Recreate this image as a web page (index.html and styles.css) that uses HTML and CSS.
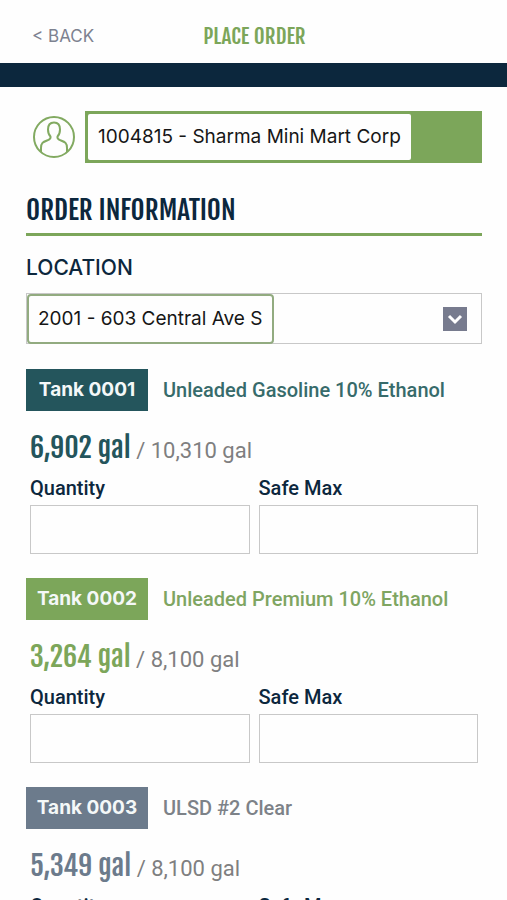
FILE: index.html
```html
<!DOCTYPE html>
<html lang="en">
<head>
<meta charset="utf-8">
<meta name="viewport" content="width=device-width, initial-scale=1">
<title>Place Order</title>
<link rel="stylesheet" href="styles.css">
</head>
<body>
<header class="topbar">
  <a class="back" href="#"><span>&lt;</span> BACK</a>
  <h1 class="title">PLACE ORDER</h1>
</header>
<div class="band"></div>
<main class="content">
  <div class="account">
    <svg class="avatar" viewBox="0 0 42 42" fill="none" stroke="currentColor" aria-hidden="true">
      <circle cx="21" cy="21" r="20"/>
      <path d="M8 36v-4c0-5 2-6 6-7.500 3-1 4-2 3.500-4-2-2-2.500-4-2.500-7 0-4 2-7 6-7s6 3 6 7c0 3-.5 5-2.500 7-.5 2 .5 3 3.500 4 4 1.500 6 2.500 6 7.500v4"/>
    </svg>
    <div class="account-box">
      <select class="account-select" aria-label="Account">
        <option>1004815 - Sharma Mini Mart Corp</option>
      </select>
    </div>
  </div>

  <h2 class="section-title">ORDER INFORMATION</h2>

  <label class="location-label" for="location">LOCATION</label>
  <div class="location-box">
    <select class="location-select" id="location">
      <option>2001 - 603 Central Ave S</option>
    </select>
    <button class="chevron" type="button" aria-label="Open locations">
      <svg viewBox="0 0 24 24" fill="none" stroke="currentColor" aria-hidden="true"><path d="M6 9l6 6 6-6"/></svg>
    </button>
  </div>

  <section class="tank tank-teal">
    <div class="tank-head"><h3 class="badge">Tank 0001</h3><span class="product">Unleaded Gasoline 10% Ethanol</span></div>
    <p class="level"><strong class="current">6,902 gal</strong> / 10,310 gal</p>
    <div class="fields">
      <div class="field"><label for="q1">Quantity</label><input id="q1" type="text" inputmode="numeric"></div>
      <div class="field"><label for="m1">Safe Max</label><input id="m1" type="text" inputmode="numeric"></div>
    </div>
  </section>

  <section class="tank tank-green">
    <div class="tank-head"><h3 class="badge">Tank 0002</h3><span class="product">Unleaded Premium 10% Ethanol</span></div>
    <p class="level"><strong class="current">3,264 gal</strong> / 8,100 gal</p>
    <div class="fields">
      <div class="field"><label for="q2">Quantity</label><input id="q2" type="text" inputmode="numeric"></div>
      <div class="field"><label for="m2">Safe Max</label><input id="m2" type="text" inputmode="numeric"></div>
    </div>
  </section>

  <section class="tank tank-slate">
    <div class="tank-head"><h3 class="badge">Tank 0003</h3><span class="product">ULSD #2 Clear</span></div>
    <p class="level"><strong class="current">5,349 gal</strong> / 8,100 gal</p>
    <div class="fields">
      <div class="field"><label for="q3">Quantity</label><input id="q3" type="text" inputmode="numeric"></div>
      <div class="field"><label for="m3">Safe Max</label><input id="m3" type="text" inputmode="numeric"></div>
    </div>
  </section>
</main>
</body>
</html>
```
FILE: styles.css
```css
:root {
  --navy: #0c273d;
  --green: #7ca65a;
  --teal: #24555c;
  --slate: #6c7b8c;
  --grey: #7f7f80;
  --line: #c8c8c8;
  --condensed: "Fjalla One", "Roboto Condensed", "Liberation Sans Narrow", "Liberation Sans", sans-serif;
  --ui: Inter, sans-serif;
}

* { box-sizing: border-box; }

body {
  margin: 0;
  background: #fefefe;
  color: var(--navy);
  font-family: Roboto, sans-serif;
}

h1, h2, h3, p { margin: 0; }

.topbar {
  display: grid;
  grid-template-columns: 1fr auto 1fr;
  align-items: center;
  height: 63px;
  padding: 8px 30px 0 32px;
}

.back {
  color: #7d8290;
  font: 400 17px/24px var(--ui);
  text-decoration: none;
}

.title {
  color: var(--green);
  font: 400 21px/28px var(--condensed);
}

.band {
  height: 24px;
  background: var(--navy);
}

.content { padding: 24px 25px 24px 26px; }

.account {
  display: flex;
  align-items: center;
  gap: 10px;
  padding-left: 7px;
}

.avatar {
  flex: none;
  width: 42px;
  height: 42px;
  color: #82aa61;
  stroke-width: 2;
}

.account-box {
  flex: 1;
  display: flex;
  height: 52px;
  padding: 3px;
  background: var(--green);
}

select {
  appearance: none;
  margin: 0;
  background: #fefefe;
  color: #161616;
  font: 400 19px/24px var(--ui);
}

.account-select {
  padding: 0 10px;
  border: 0;
  border-radius: 2px;
}

.section-title {
  margin-top: 27px;
  padding-bottom: 2px;
  border-bottom: 3px solid var(--green);
  font: 400 27px/41px var(--condensed);
}

.location-label {
  display: block;
  margin-top: 20px;
  font: 500 21px/24px var(--ui);
}

.location-box {
  display: flex;
  align-items: center;
  justify-content: space-between;
  height: 51px;
  margin-top: 13px;
  padding-right: 14px;
  border: 1px solid var(--line);
}

.location-select {
  height: 50px;
  padding: 0 9px;
  border: 2px solid #92ab80;
  border-radius: 4px;
}

.chevron {
  width: 24px;
  height: 24px;
  padding: 0;
  border: 0;
  background: #777b8e;
  color: #fff;
}

.chevron svg {
  display: block;
  stroke-width: 3;
}

.tank { margin-top: 24px; }
.tank-teal { margin-top: 25px; --accent: var(--teal); --product: #376b6b; }
.tank-green { --accent: var(--green); --product: #7fa562; }
.tank-slate { --accent: var(--slate); --product: #7d8288; }

.tank-head {
  display: flex;
  align-items: center;
  gap: 15px;
}

.badge {
  min-width: 122px;
  background: var(--accent);
  color: #f4f8f8;
  font: 700 19px/42px var(--ui);
  text-align: center;
}

.product {
  color: var(--product);
  font-size: 20px;
  font-weight: 500;
  line-height: 24px;
}

.level {
  margin-top: 18px;
  padding-left: 4px;
  color: var(--grey);
  font-size: 22px;
  line-height: 38px;
}

.current {
  color: var(--accent);
  font: 400 28px/38px var(--condensed);
}

.fields {
  display: grid;
  grid-template-columns: 1fr 1fr;
  gap: 9px;
  margin-top: 6px;
  padding: 0 4px;
}

.field label {
  display: block;
  margin-bottom: 5px;
  font-size: 20px;
  font-weight: 500;
  line-height: 24px;
}

.field input {
  display: block;
  width: 100%;
  height: 49px;
  padding: 0 12px;
  border: 1px solid var(--line);
  background: #fefefe;
  font: 400 19px/24px var(--ui);
}
```
